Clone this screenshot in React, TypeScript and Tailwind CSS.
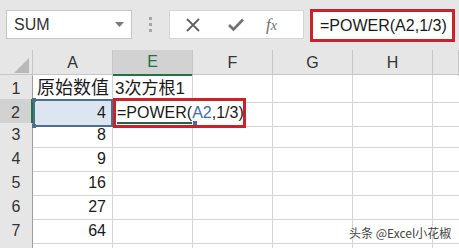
import React from 'react';

const font = { fontFamily: '"Liberation Sans", "Noto Sans CJK SC", sans-serif' };

const cols = ['A', 'E', 'F', 'G', 'H', ''];
const rows = [
  { n: 1, a: '原始数值', e: '3次方根1' },
  { n: 2, a: '4', e: '' },
  { n: 3, a: '8', e: '' },
  { n: 4, a: '9', e: '' },
  { n: 5, a: '16', e: '' },
  { n: 6, a: '27', e: '' },
  { n: 7, a: '64', e: '' },
  { n: 8, a: '', e: '' },
];

export default function App() {
  return (
    <div className="relative w-[459px] h-[248px] overflow-hidden bg-white text-[#1a1a1a]" style={font}>
      {/* Formula bar */}
      <div className="h-[50px] bg-[#e6e6e6] flex items-start">
        <div className="ml-[6px] mt-[10px] w-[126px] h-[29px] bg-white border border-[#c6c6c6] flex items-center justify-between pl-[7px] pr-[7px]">
          <span className="text-[16px] text-[#333]">SUM</span>
          <svg width="9" height="5" viewBox="0 0 9 5">
            <path d="M0 0h9L4.5 5z" fill="#777" />
          </svg>
        </div>
        <div className="ml-[17px] mt-[17px] flex flex-col gap-[3px]">
          <div className="w-[3px] h-[3px] bg-[#a6a6a6]" />
          <div className="w-[3px] h-[3px] bg-[#a6a6a6]" />
          <div className="w-[3px] h-[3px] bg-[#a6a6a6]" />
        </div>
        <div className="ml-[17px] mt-[10px] w-[135px] h-[29px] bg-white border border-[#d4d4d4] flex items-center">
          <svg className="ml-[16px]" width="14" height="14" viewBox="0 0 14 14">
            <path d="M1 1l12 12M13 1L1 13" stroke="#606060" strokeWidth="1.8" />
          </svg>
          <svg className="ml-[28px]" width="16" height="13" viewBox="0 0 16 13">
            <path d="M1 7l4.5 4.5L15 1.5" stroke="#707070" strokeWidth="2.6" fill="none" />
          </svg>
          <span className="ml-[22px] text-[17px] italic text-[#707070]" style={{ fontFamily: '"Liberation Serif", serif' }}>
            f<span className="text-[14px]">x</span>
          </span>
        </div>
        <div className="ml-[6px] mt-[9px] w-[145px] h-[33px] bg-white border-[3px] border-[#c8232c] flex items-center pl-[7px]">
          <span className="text-[16px]">=POWER(A2,1/3)</span>
        </div>
      </div>

      {/* Column headers */}
      <div className="grid grid-cols-[33px_80px_80px_80px_80px_80px_1fr] h-[25px] bg-[#e6e6e6] border-b border-[#c6c6c6]">
        <div className="relative border-r border-[#c6c6c6]">
          <svg className="absolute right-[3px] bottom-[3px]" width="15" height="15" viewBox="0 0 15 15">
            <path d="M15 0v15H0z" fill="#b9b9b9" />
          </svg>
        </div>
        {cols.map((c) => (
          <div
            key={c || 'x'}
            className={
              c === 'E'
                ? 'flex items-center justify-center text-[16px] bg-[#d2d2d2] text-[#217346] border-r border-[#c6c6c6] border-b-2 border-b-[#217346]'
                : 'flex items-center justify-center text-[16px] text-[#333] border-r border-[#c6c6c6]'
            }
          >
            {c}
          </div>
        ))}
      </div>

      {/* Rows */}
      {rows.map((r) => (
        <div key={r.n} className="grid grid-cols-[33px_80px_80px_80px_80px_80px_1fr] h-[24px]">
          <div
            className={
              r.n === 2
                ? 'flex items-center justify-center text-[16px] bg-[#d2d2d2] text-[#333] border-b border-[#c6c6c6] border-r-2 border-r-[#217346]'
                : 'flex items-center justify-center text-[16px] bg-[#e6e6e6] text-[#333] border-b border-[#c6c6c6] border-r border-r-[#9e9e9e]'
            }
          >
            {r.n < 8 ? r.n : ''}
          </div>
          {r.n === 2 ? (
            <div className="relative flex items-center justify-end pr-[5px] text-[16px] bg-[#dce6f1] border-2 border-[#4d6f8c]">
              {r.a}
              <div className="absolute -left-[3px] -top-[3px] w-[4px] h-[4px] bg-[#4d6f8c]" />
              <div className="absolute -left-[3px] -bottom-[3px] w-[4px] h-[4px] bg-[#4d6f8c]" />
            </div>
          ) : (
            <div
              className={
                r.n === 1
                  ? 'flex items-center pl-[4px] text-[18px] border-r border-b border-[#d4d4d4] whitespace-nowrap'
                  : 'flex items-center justify-end pr-[6px] text-[16px] border-r border-b border-[#d4d4d4]'
              }
            >
              {r.a}
            </div>
          )}
          {r.n === 2 ? (
            <div className="relative border-r border-b border-[#d4d4d4] overflow-visible">
              <div className="absolute left-0 -top-[1px] w-[133px] h-[30px] bg-white border-[3px] border-[#c8232c] flex items-center pl-[1px] z-10">
                <span className="relative text-[16px] whitespace-nowrap">
                  =POWER(<span className="text-[#3b6ea5]">A2</span>,1/3)
                </span>
                <div className="absolute left-[1px] top-[21px] w-[75px] h-[2px] bg-[#2f5d45]" />
                <div className="absolute left-[77px] top-[20px] w-[4px] h-[4px] bg-[#3b6ea5]" />
              </div>
            </div>
          ) : (
            <div className="flex items-center pl-[2px] text-[17px] border-r border-b border-[#d4d4d4] whitespace-nowrap">
              {r.e}
            </div>
          )}
          <div className="border-r border-b border-[#d4d4d4]" />
          <div className="border-r border-b border-[#d4d4d4]" />
          <div className="border-r border-b border-[#d4d4d4]" />
          <div className="border-b border-[#d4d4d4]" />
        </div>
      ))}

      {/* Watermark */}
      <div className="absolute left-[349px] top-[224px] text-[12px] text-[#444] whitespace-nowrap" style={{ fontFamily: '"Noto Sans CJK SC", sans-serif', textShadow: '0 0 2px #fff' }}>
        头条 @Excel小花椒
      </div>
    </div>
  );
}
